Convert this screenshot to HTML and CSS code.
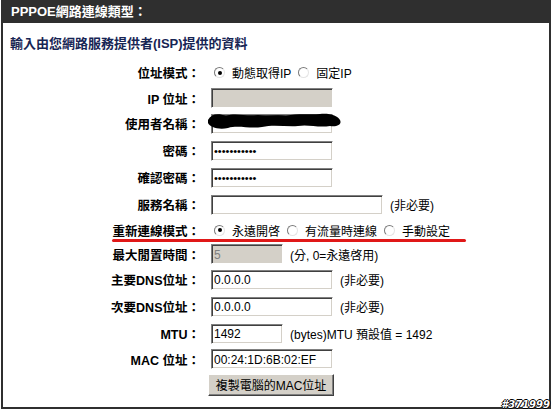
FILE: index.html
```html
<!DOCTYPE html>
<html lang="zh-Hant">
<head>
    <meta charset="UTF-8">
    <title>PPPOE</title>
    <link rel="stylesheet" href="styles.css">
</head>
<body>
    <div class="panel">
        <div class="panel-title">PPPOE網路連線類型：</div>
        <div class="panel-body">
            <p class="intro">輸入由您網路服務提供者(ISP)提供的資料</p>

            <div class="form">
                <div class="row">
                    <label class="lbl">位址模式：</label>
                    <div class="field">
                        <input type="radio" name="mode" checked><span class="opt">動態取得IP</span>
                        <input type="radio" name="mode"><span class="opt">固定IP</span>
                    </div>
                </div>
                <div class="row short">
                    <label class="lbl">IP 位址：</label>
                    <div class="field"><input class="box" type="text" disabled></div>
                </div>
                <div class="row">
                    <label class="lbl">使用者名稱：</label>
                    <div class="field">
                        <input class="box" type="text">
                        <!-- blacked out user name -->
                        <svg class="scribble" width="136" height="22" viewBox="0 0 136 22">
                            <path d="M2 10 C5 4 12 3 20 6 C30 2 40 7 52 5 C62 7 70 4 80 6 C92 3 104 5 114 4 C124 3 132 6 134 10 C136 14 132 17 124 16 C112 18 102 14 92 16 C80 17 68 14 56 17 C44 19 32 15 22 18 C12 20 4 17 2 13 Z" fill="#000"/>
                            <path d="M6 8 C20 12 40 11 58 12 M70 13 C90 15 110 12 130 13" stroke="#000" stroke-width="3" fill="none"/>
                        </svg>
                    </div>
                </div>
                <div class="row">
                    <label class="lbl">密碼：</label>
                    <div class="field"><input class="box" type="password" value="1234567890a"></div>
                </div>
                <div class="row">
                    <label class="lbl">確認密碼：</label>
                    <div class="field"><input class="box" type="password" value="1234567890a"></div>
                </div>
                <div class="row">
                    <label class="lbl">服務名稱：</label>
                    <div class="field"><input class="box wide" type="text"><span class="note">(非必要)</span></div>
                </div>
                <div class="row short">
                    <label class="lbl">重新連線模式：</label>
                    <div class="field">
                        <input type="radio" name="reconnect" checked><span class="opt">永遠開啓</span>
                        <input type="radio" name="reconnect"><span class="opt">有流量時連線</span>
                        <input type="radio" name="reconnect"><span class="opt">手動設定</span>
                    </div>
                </div>
                <div class="row short">
                    <label class="lbl">最大閒置時間：</label>
                    <div class="field"><input class="box narrow" type="text" value="5" disabled><span class="note">(分, 0=永遠啓用)</span></div>
                </div>
                <div class="row">
                    <label class="lbl">主要DNS位址：</label>
                    <div class="field"><input class="box" type="text" value="0.0.0.0"><span class="note">(非必要)</span></div>
                </div>
                <div class="row">
                    <label class="lbl">次要DNS位址：</label>
                    <div class="field"><input class="box" type="text" value="0.0.0.0"><span class="note">(非必要)</span></div>
                </div>
                <div class="row">
                    <label class="lbl">MTU：</label>
                    <div class="field"><input class="box narrow" type="text" value="1492"><span class="note">(bytes)MTU 預設值 = 1492</span></div>
                </div>
                <div class="row short">
                    <label class="lbl">MAC 位址：</label>
                    <div class="field"><input class="box" type="text" value="00:24:1D:6B:02:EF"></div>
                </div>
                <div class="row">
                    <span class="lbl"></span>
                    <div class="field"><button class="btn" type="button">複製電腦的MAC位址</button></div>
                </div>
            </div>

            <div class="mark"></div>
        </div>
        <div class="stamp">#371999</div>
    </div>
</body>
</html>
```

FILE: styles.css
```css
body {
    margin: 0;
    background: #fff;
    font-family: "Liberation Sans", "Noto Sans CJK TC", sans-serif;
    font-size: 12px;
    color: #000;
}
.panel {
    position: relative;
    width: 546px;
    height: 407px;
    margin-left: 1px;
    border: 2px solid #2f2f2f;
    border-top: none;
}
.panel-title {
    height: 23px;
    margin: 0 -2px;
    padding-left: 10px;
    background: #2f2f2f;
    color: #fff;
    font-size: 13px;
    font-weight: bold;
    line-height: 23px;
}
.panel-body {
    position: relative;
}
.intro {
    margin: 0;
    padding: 13px 0 0 7px;
    height: 23px;
    color: #172554;
    font-size: 13px;
    font-weight: bold;
    line-height: 16px;
}
.row {
    display: grid;
    grid-template-columns: 197px 1fr;
    column-gap: 11px;
    align-items: center;
    height: 27px;
}
.row.short {
    height: 24px;
}
.lbl {
    text-align: right;
    font-size: 12.5px;
    font-weight: bold;
}
.field {
    position: relative;
    display: flex;
    align-items: center;
}
.box {
    box-sizing: border-box;
    width: 122px;
    height: 20px;
    margin: 0;
    padding: 1px 2px 0;
    border: 1px solid;
    border-color: #808080 #fff #fff #808080;
    box-shadow: inset 1px 1px 0 #404040, inset -1px -1px 0 #d4d0c8;
    background: #fff;
    font-family: "Liberation Sans", sans-serif;
    font-size: 12px;
    color: #000;
    outline: none;
}
.box:disabled {
    background: #d4d0c8;
    color: #808080;
}
.box.wide {
    width: 172px;
}
.box.narrow {
    width: 72px;
}
.box[type="password"] {
    font-size: 11px;
}
.note {
    margin-left: 7px;
}
input[type="radio"] {
    appearance: none;
    box-sizing: border-box;
    width: 11px;
    height: 11px;
    margin: 0 7px 0 3px;
    border: 1px solid;
    border-color: #7a7a7a #e4e4e4 #e4e4e4 #7a7a7a;
    border-radius: 50%;
    background: #fff;
    position: relative;
}
input[type="radio"]:checked::after {
    content: "";
    position: absolute;
    left: 2.5px;
    top: 2.5px;
    width: 4px;
    height: 4px;
    border-radius: 50%;
    background: #000;
}
.opt {
    margin-right: 4px;
}
.scribble {
    position: absolute;
    left: -5px;
    top: -4px;
}
.btn {
    box-sizing: border-box;
    width: 126px;
    height: 22px;
    margin-left: -3px;
    padding: 0;
    border: 1px solid;
    border-color: #fff #404040 #404040 #fff;
    box-shadow: inset -1px -1px 0 #808080;
    background: #d4d0c8;
    font-family: "Liberation Sans", "Noto Sans CJK TC", sans-serif;
    font-size: 12px;
    color: #000;
}
.mark {
    position: absolute;
    left: 109px;
    top: 216px;
    width: 354px;
    height: 3px;
    border-radius: 2px;
    background: #e01818;
}
.stamp {
    position: absolute;
    right: -1px;
    bottom: -3px;
    font-family: "DejaVu Sans", sans-serif;
    font-size: 10px;
    line-height: 11px;
    font-weight: bold;
    font-style: italic;
    color: #fff;
    text-shadow: 1px 0 0 #000, -1px 0 0 #000, 0 1px 0 #000, 0 -1px 0 #000;
}
```
